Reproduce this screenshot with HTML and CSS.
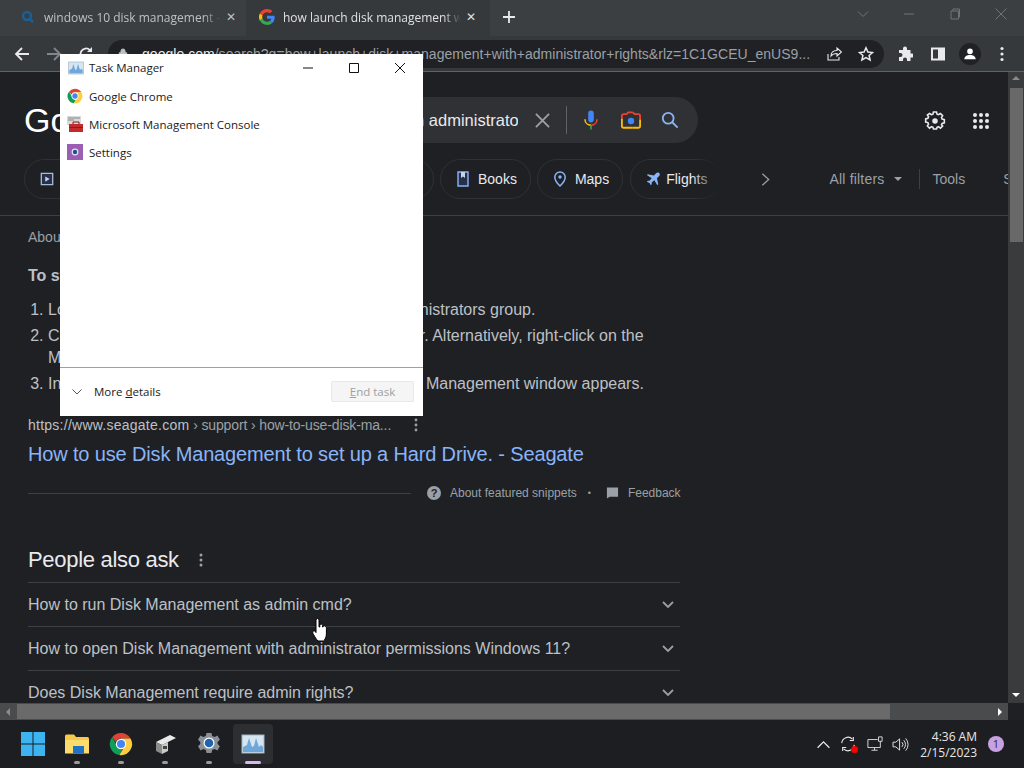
FILE: index.html
```html
<!DOCTYPE html>
<html lang="en">
<head>
  <meta charset="UTF-8" />
  <title>how launch disk management with administrator rights - Google Search</title>
  <link rel="stylesheet" href="styles.css">
</head>
<body>
  <svg class="defs" width="0" height="0">
    <symbol id="chrome" viewBox="0 0 24 24">
      <path fill="#db4437" d="M12 1a11 11 0 0 1 9.500 5.500H12a5.500 5.500 0 0 0-5.200 3.700L3.300 5.100A11 11 0 0 1 12 1z"/>
      <path fill="#0f9d58" d="M3.300 5.100l4.600 8.600a4.800 4.800 0 0 0 5.700 3.600L10.300 23A11 11 0 0 1 3.300 5.100z"/>
      <path fill="#ffcd40" d="M21.500 6.500A11 11 0 0 1 10.300 23l4.700-7.400a5 5 0 0 0 0-7.200l-3-1.900z"/>
      <circle cx="12" cy="12" r="5.200" fill="#fff"/>
      <circle cx="12" cy="12" r="4" fill="#4285f4"/>
    </symbol>
    <symbol id="taskmgr" viewBox="0 0 24 20">
      <rect x="1" y="1" width="22" height="18" fill="#d5e6f2" stroke="#9fb4c4"/>
      <path fill="#6fa8d8" d="M2 18V13l4-2 2-7 3 9 2-1 2-8 3 9 2-2 2 2v5z"/>
    </symbol>
  </svg>

  <div class="screen">
    <!-- Chrome tab strip -->
    <div class="tabstrip">
      <div class="tab">
        <svg class="tab-icon" viewBox="0 0 16 16"><circle cx="7" cy="7" r="4" fill="none" stroke="#1a5f96" stroke-width="2.500"/><path d="M10 10l3 3" stroke="#1a5f96" stroke-width="2.500"/></svg>
        <span class="tab-title">windows 10 disk management - Search</span>
        <span class="tab-close">✕</span>
      </div>
      <div class="tab tab-active">
        <svg class="tab-icon" viewBox="0 0 48 48">
          <path fill="#ea4335" d="M24 9.500c3.500 0 6.700 1.200 9.200 3.600l6.900-6.900C35.900 2.400 30.500 0 24 0 14.600 0 6.500 5.400 2.600 13.200l8 6.200C12.400 13.700 17.700 9.500 24 9.500z"/>
          <path fill="#4285f4" d="M47 24.500c0-1.600-.1-3.100-.4-4.500H24v9h12.900c-.6 3-2.200 5.500-4.700 7.200l7.700 6C44.400 37.600 47 31.600 47 24.500z"/>
          <path fill="#fbbc05" d="M10.500 28.600a14.500 14.500 0 0 1 0-9.200l-8-6.200a24 24 0 0 0 0 21.600z"/>
          <path fill="#34a853" d="M24 48c6.500 0 11.900-2.100 15.900-5.800l-7.700-6c-2.200 1.400-4.900 2.300-8.200 2.300-6.300 0-11.600-4.200-13.500-9.900l-8 6.200C6.500 42.600 14.600 48 24 48z"/>
        </svg>
        <span class="tab-title">how launch disk management with admin</span>
        <span class="tab-close">✕</span>
      </div>
      <svg class="new-tab" viewBox="0 0 12 12"><path d="M6 0v12M0 6h12" stroke="#e8eaed" stroke-width="1.800"/></svg>
      <div class="window-controls">
        <svg viewBox="0 0 14 14"><path d="M2 4.500l5 5 5-5"/></svg>
        <svg viewBox="0 0 14 14"><path d="M2 7h10"/></svg>
        <svg viewBox="0 0 14 14"><path d="M3 4h7.500v8H3zM5 4V2h6.500v8h-1"/></svg>
        <svg viewBox="0 0 14 14"><path d="M1.500 1.500l11 11M12.500 1.500l-11 11"/></svg>
      </div>
    </div>

    <!-- Chrome toolbar -->
    <div class="toolbar">
      <svg class="nav-icon" viewBox="0 0 16 16"><path d="M15 8H2M8 2L2 8l6 6" fill="none" stroke="#e8eaed" stroke-width="1.800"/></svg>
      <svg class="nav-icon" viewBox="0 0 16 16"><path d="M1 8h13M8 2l6 6-6 6" fill="none" stroke="#80868b" stroke-width="1.800"/></svg>
      <svg class="nav-icon" viewBox="0 0 16 16"><path d="M13.500 8a5.500 5.500 0 1 1-1.600-3.900" fill="none" stroke="#e8eaed" stroke-width="1.800"/><path d="M14 1v5H9z" fill="#e8eaed"/></svg>
      <div class="omnibox">
        <svg class="lock" viewBox="0 0 12 14"><path d="M1.500 6h9v7h-9zM3.500 6V4a2.500 2.500 0 0 1 5 0v2" fill="#bdc1c6" stroke="#bdc1c6"/></svg>
        <span class="url"><span class="url-host">google.com</span>/search?q=how+launch+disk+management+with+administrator+rights&amp;rlz=1C1GCEU_enUS9...</span>
        <svg class="omni-icon" viewBox="0 0 16 16"><path d="M2 8v6h11v-3M5 10c0-4 3-5.500 6-5.500V2l4.500 4L11 10V7.500C8.500 7.500 6.500 8 5 10z" fill="none" stroke="#e8eaed" stroke-width="1.100"/></svg>
        <svg class="omni-icon" viewBox="0 0 16 16"><path d="M8 1.800l1.900 4.200 4.600.5-3.400 3 1 4.500L8 11.700 3.900 14l1-4.500-3.400-3 4.600-.5z" fill="none" stroke="#e8eaed" stroke-width="1.500"/></svg>
      </div>
      <svg class="tool-icon tool-puzzle" viewBox="0 0 16 16"><path fill="#e8eaed" d="M6 2.500a2 2 0 0 1 4 0V4h3.500v3.500H15a2 2 0 0 1 0 4h-1.500V15H10v-1.500a2 2 0 0 0-4 0V15H2v-4h1.500a2 2 0 0 0 0-4H2V4h4z"/></svg>
      <svg class="tool-icon tool-panel" viewBox="0 0 16 16"><path fill-rule="evenodd" fill="#e8eaed" d="M1 1.500h14v13H1zM3 3.500v9h5v-9z"/></svg>
      <span class="avatar">
        <svg viewBox="0 0 16 16"><circle cx="8" cy="5" r="3.200" fill="#fff"/><path d="M1.500 14c0-3.500 3-5 6.500-5s6.500 1.500 6.500 5z" fill="#fff"/></svg>
      </span>
      <svg class="tool-icon" viewBox="0 0 16 16"><g fill="#e8eaed"><circle cx="8" cy="2.500" r="1.600"/><circle cx="8" cy="8" r="1.600"/><circle cx="8" cy="13.500" r="1.600"/></g></svg>
    </div>

    <div class="viewport">
      <main class="page">
        <header class="search-head">
          <div class="search-row">
            <span class="logo">Google</span>
            <div class="searchbox">
              <span class="query">how launch disk management with administrator rights</span>
              <svg class="clear-icon" viewBox="0 0 16 16"><path d="M1 1l14 14M15 1L1 15" stroke="#9aa0a6" stroke-width="2"/></svg>
              <span class="search-sep"></span>
              <svg class="mic-icon" viewBox="0 0 20 26">
                <rect x="6.500" y="1" width="7" height="15" rx="3.500" fill="#4285f4"/>
                <path d="M2.500 12c0 4.500 3.300 7.500 7.500 7.500" fill="none" stroke="#fbbc05" stroke-width="2"/>
                <path d="M10 19.500c4.200 0 7.500-3 7.500-7.500" fill="none" stroke="#ea4335" stroke-width="2"/>
                <path d="M10 19.500V25" stroke="#34a853" stroke-width="2"/>
              </svg>
              <svg class="lens-icon" viewBox="0 0 22 20" fill="none" stroke-width="2">
                <path d="M1 8V5a2 2 0 0 1 2-2h3l2-2h5" stroke="#ea4335"/>
                <path d="M13 1l2 2h4a2 2 0 0 1 2 2v4" stroke="#ea4335"/>
                <path d="M21 9v7a2 2 0 0 1-2 2h-6" stroke="#fbbc05"/>
                <path d="M1 8v8a2 2 0 0 0 2 2h10" stroke="#fbbc05"/>
                <circle cx="11" cy="10.500" r="3.500" fill="#4285f4" stroke="none"/>
              </svg>
              <svg class="search-icon" viewBox="0 0 20 20"><circle cx="8" cy="8" r="6" fill="none" stroke="#8ab4f8" stroke-width="2"/><path d="M12.500 12.500l6 6" stroke="#8ab4f8" stroke-width="2"/></svg>
            </div>
            <svg class="gear-icon" viewBox="0 0 24 24"><path fill="none" stroke="#e8eaed" stroke-width="2" d="M10 2h4l.6 2.800 1.900.8L19 4l2.800 2.800-1.500 2.500.8 1.900 2.900.8v4l-2.900.7-.8 1.900L21.800 20 19 22.800 16.500 21l-1.900.8L14 24h-4l-.6-2.200-1.900-.8L5 22.800 2.200 20l1.500-2.400-.8-1.900L0 15v-4l2.900-.8.8-1.900L2.200 6 5 4l2.500 1.600 1.900-.8z" transform="translate(1.800 .4) scale(.85)"/><circle cx="12" cy="12" r="3" fill="#e8eaed"/></svg>
            <svg class="apps-icon" viewBox="0 0 18 18"><g fill="#e8eaed"><circle cx="3" cy="3" r="2"/><circle cx="9" cy="3" r="2"/><circle cx="15" cy="3" r="2"/><circle cx="3" cy="9" r="2"/><circle cx="9" cy="9" r="2"/><circle cx="15" cy="9" r="2"/><circle cx="3" cy="15" r="2"/><circle cx="9" cy="15" r="2"/><circle cx="15" cy="15" r="2"/></g></svg>
          </div>
          <nav class="chips">
            <div class="chips-left">
              <span class="chip chip-wide">
                <svg class="chip-icon" viewBox="0 0 16 16"><path d="M1.500 1.500h13v13h-13z" fill="#26304a" stroke="#a9b9d6" stroke-width="1.500"/><path d="M6 5l5 3-5 3z" fill="#c5d3ea"/></svg>
                Videos
              </span>
              <span class="chip chip-wide">Images</span>
              <span class="chip chip-wide">News</span>
            </div>
            <span class="chip chip-books">
              <svg class="chip-icon" viewBox="0 0 12 16"><path d="M1 1h10v14H1z" fill="#26304a" stroke="#8ab4f8" stroke-width="1.400"/><path d="M4 1v6l2-1.500L8 7V1z" fill="#c5d3ea"/></svg>
              Books
            </span>
            <span class="chip chip-maps">
              <svg class="chip-icon" viewBox="0 0 14 16"><path d="M7 1a5.200 5.200 0 0 0-5.200 5.200C1.800 10 7 15 7 15s5.200-5 5.200-8.800A5.200 5.200 0 0 0 7 1z" fill="none" stroke="#8ab4f8" stroke-width="1.500"/><circle cx="7" cy="6" r="1.700" fill="#8ab4f8"/></svg>
              Maps
            </span>
            <span class="chip chip-faded">
              <svg class="chip-icon" viewBox="0 0 16 16"><path fill="#8ab4f8" d="M15 1c-1-1-2.500-.5-3.500.5L9 4 2 2.500 1 3.500 6.500 7 4 10H2l-1 1 3 1.500L5.500 15l1-1v-2l3-2.500 3.500 5.500 1-1-1.500-7 2.500-2.500c1-1 1.200-2.300 0-3.500z"/></svg>
              Flights
            </span>
            <svg class="chips-next" viewBox="0 0 10 16"><path d="M1.500 1.500L8.500 8l-7 6.500" fill="none" stroke="#9aa0a6" stroke-width="1.500"/></svg>
            <span class="filter-link">All filters</span>
            <span class="caret"></span>
            <span class="filter-sep"></span>
            <span class="tools-link">Tools</span>
            <span class="saved-link">SafeSearch</span>
          </nav>
        </header>

        <section class="results">
          <div class="about">About featured snippet</div>
          <div class="snippet-head">To start Disk Management with admin rights:</div>
          <ol class="steps">
            <li>Log on to the computer, using a member of the Administrators group.</li>
            <li>Click Start, type in disk management and press Enter. Alternatively, right-click on the Management Console icon.</li>
            <li>In the User Account Control box click Yes till the Disk Management window appears.</li>
          </ol>
          <div class="source">
            <span class="source-host">https://www.seagate.com</span><span class="source-path"> › support › how-to-use-disk-ma...</span>
            <svg class="dots" viewBox="0 0 4 14"><g fill="#9aa0a6"><circle cx="2" cy="2" r="1.400"/><circle cx="2" cy="7" r="1.400"/><circle cx="2" cy="12" r="1.400"/></g></svg>
          </div>
          <a class="result-title">How to use Disk Management to set up a Hard Drive. - Seagate</a>
          <div class="snippet-foot">
            <span class="foot-line"></span>
            <svg class="foot-icon" viewBox="0 0 14 14"><circle cx="7" cy="7" r="7" fill="#9aa0a6"/><text x="7" y="11" text-anchor="middle" class="foot-q">?</text></svg>
            <span>About featured snippets</span>
            <span class="foot-dot">•</span>
            <svg class="foot-icon foot-flag" viewBox="0 0 14 12"><path d="M1 0h12v10H4l-3 2z" fill="#9aa0a6"/></svg>
            <span>Feedback</span>
          </div>
          <h2 class="paa-head">People also ask
            <svg class="dots" viewBox="0 0 4 14"><g fill="#9aa0a6"><circle cx="2" cy="2" r="1.500"/><circle cx="2" cy="7" r="1.500"/><circle cx="2" cy="12" r="1.500"/></g></svg>
          </h2>
          <div class="paa-row">How to run Disk Management as admin cmd?<svg class="paa-chevron" viewBox="0 0 12 8"><path d="M1 1l5 5 5-5" fill="none" stroke="#9aa0a6" stroke-width="1.800"/></svg></div>
          <div class="paa-row">How to open Disk Management with administrator permissions Windows 11?<svg class="paa-chevron" viewBox="0 0 12 8"><path d="M1 1l5 5 5-5" fill="none" stroke="#9aa0a6" stroke-width="1.800"/></svg></div>
          <div class="paa-row">Does Disk Management require admin rights?<svg class="paa-chevron" viewBox="0 0 12 8"><path d="M1 1l5 5 5-5" fill="none" stroke="#9aa0a6" stroke-width="1.800"/></svg></div>
        </section>
      </main>
      <div class="vscroll">
        <span class="arrow-up"></span>
        <span class="vthumb"></span>
        <span class="arrow-down"></span>
      </div>
    </div>

    <div class="hscroll-row">
      <div class="hscroll">
        <span class="arrow-left"></span>
        <span class="hthumb"></span>
        <span class="arrow-right"></span>
      </div>
      <span class="scroll-corner"></span>
    </div>

    <!-- Windows taskbar -->
    <footer class="taskbar">
      <div class="task-item">
        <svg class="start-icon" viewBox="0 0 24 24"><g fill="#3cb4f2"><rect x="0" y="0" width="11.500" height="11.500"/><rect x="12.500" y="0" width="11.500" height="11.500"/><rect x="0" y="12.500" width="11.500" height="11.500"/><rect x="12.500" y="12.500" width="11.500" height="11.500"/></g></svg>
      </div>
      <div class="task-item task-open">
        <svg class="task-icon" viewBox="0 0 24 20"><path d="M0 2a1.500 1.500 0 0 1 1.500-1.500H9L11 3h11.500A1.500 1.500 0 0 1 24 4.500V19H0z" fill="#f7c948"/><path d="M0 6h24v13.500H0z" fill="#fbdc6c"/><rect x="8" y="12" width="11" height="7.500" fill="#1f72c4"/></svg>
      </div>
      <div class="task-item task-open"><svg class="task-icon task-chrome"><use href="#chrome"/></svg></div>
      <div class="task-item task-open">
        <svg class="task-icon" viewBox="0 0 24 22"><path d="M3 9l14-7 6 3-14 7z" fill="#e9e9e9"/><path d="M3 9l6 3v9l-6-3z" fill="#8c8c8c"/><path d="M9 12l6-3v9l-6 3z" fill="#c9c9c9"/><rect x="10" y="13" width="4" height="3" fill="#444"/></svg>
      </div>
      <div class="task-item task-open">
        <svg class="task-icon" viewBox="0 0 24 24"><path d="M9.500 1h5l.7 3 2.400 1 2.800-1.400 2.500 4.200-2.300 2.100v2.200l2.300 2.100-2.500 4.200-2.800-1.400-2.400 1-.7 3h-5l-.7-3-2.400-1-2.800 1.400L1 14.200l2.300-2.100v-2.200L1 7.800l2.500-4.200 2.800 1.400 2.400-1z" fill="#8a9096"/><circle cx="12" cy="11" r="5.500" fill="#fff"/><circle cx="12" cy="11" r="4.300" fill="#1f62b0"/></svg>
      </div>
      <div class="task-item task-active"><svg class="task-icon task-tm"><use href="#taskmgr"/></svg></div>

      <div class="tray">
        <svg class="tray-icon" viewBox="0 0 14 14"><path d="M1.500 10L7 4.500l5.500 5.500" fill="none" stroke="#e8e8e8" stroke-width="1.200"/></svg>
        <span class="sync">
          <svg class="tray-icon tray-sync" viewBox="0 0 18 18"><path d="M2 8a7 7 0 0 1 12-4.500M16 10a7 7 0 0 1-12 4.500" fill="none" stroke="#e8e8e8" stroke-width="1.200"/><path d="M15 1v4h-4M3 17v-4h4" fill="none" stroke="#e8e8e8" stroke-width="1.200"/></svg>
          <span class="sync-dot"></span>
        </span>
        <svg class="tray-icon tray-net" viewBox="0 0 18 18"><path d="M12 4H1v9h14V9M5 16h7M8.500 13v3" fill="none" stroke="#e8e8e8"/><path d="M13 1h4v5h-4zM15 6v3" fill="none" stroke="#e8e8e8"/></svg>
        <svg class="tray-icon tray-vol" viewBox="0 0 18 16"><path d="M1 5.500h3L8 2v12L4 10.500H1zM10.500 5.500a3.500 3.500 0 0 1 0 5M12.500 3.500a6.500 6.500 0 0 1 0 9M14.500 1.500a9.500 9.500 0 0 1 0 13" fill="none" stroke="#e8e8e8"/></svg>
        <div class="clock">
          <span>4:36 AM</span>
          <span>2/15/2023</span>
        </div>
        <span class="notify-badge">1</span>
      </div>
    </footer>

    <!-- Task Manager window floating over the browser -->
    <div class="tm-window">
      <div class="tm-title">
        <svg class="tm-app-icon"><use href="#taskmgr"/></svg>
        <span class="tm-title-text">Task Manager</span>
        <div class="tm-controls">
          <svg viewBox="0 0 12 12"><path d="M1 6h10"/></svg>
          <svg viewBox="0 0 12 12"><path d="M1.500 1.500h9v9h-9z"/></svg>
          <svg viewBox="0 0 12 12"><path d="M1 1l10 10M11 1L1 11"/></svg>
        </div>
      </div>
      <ul class="tm-list">
        <li><svg class="tm-app-icon"><use href="#chrome"/></svg>Google Chrome</li>
        <li>
          <svg class="tm-app-icon" viewBox="0 0 16 16"><path d="M0 0h14v9H0z" fill="#d9d9d9"/><path d="M1 2h12M1 4h6" stroke="#888"/><rect x="2" y="8" width="14" height="8" fill="#c22b2b"/><path d="M6 8V6h6v2" fill="none" stroke="#7a1a1a"/><path d="M2 11.500h14" stroke="#8f1a1a"/></svg>
          Microsoft Management Console
        </li>
        <li>
          <svg class="tm-app-icon" viewBox="0 0 16 16"><rect width="16" height="16" fill="#9a5fb4"/><circle cx="8" cy="8" r="3.400" fill="#e5e5f2"/><circle cx="8" cy="8" r="2.200" fill="#1f4f90"/></svg>
          Settings
        </li>
      </ul>
      <div class="tm-footer">
        <span class="more-details">
          <svg viewBox="0 0 10 6"><path d="M.5.500L5 5 9.500.500" fill="none" stroke="#555"/></svg>
          <span>More <u>d</u>etails</span>
        </span>
        <button class="end-task" type="button" disabled><u>E</u>nd task</button>
      </div>
    </div>

    <svg class="hand-cursor" viewBox="0 0 16 24"><path d="M4 2a1.500 1.500 0 0 1 3 0v7h.8V7.500a1.400 1.400 0 0 1 2.800 0V9h.6V8.500a1.400 1.400 0 0 1 2.400 0c.600.500.800 1 .8 2v5.500c0 3-1.500 6-3 7H6c-2-2-3-4-4.500-6.500C.5 15 .5 13.500 1.500 13c1-.4 1.800.2 2.500 1.500z" fill="#fff" stroke="#000" stroke-width="1"/></svg>
  </div>
</body>
</html>
```

FILE: styles.css
```css
* {
  box-sizing: border-box;
}

body {
  margin: 0;
  font-family: "Liberation Sans", Arial, sans-serif;
  background-color: #1f2024;
}

.defs {
  position: absolute;
}

.screen {
  position: relative;
  width: 1024px;
  height: 768px;
  overflow: hidden;
  display: flex;
  flex-direction: column;
}

/* browser chrome */
.tabstrip {
  height: 36px;
  display: flex;
  align-items: center;
  padding-left: 8px;
  background-color: #3b3f42;
  flex-shrink: 0;
}

.tab {
  width: 238px;
  height: 36px;
  padding: 0 5px 2px 12px;
  display: flex;
  align-items: center;
  color: #bdc1c6;
}

.tab-active {
  width: 244px;
  padding: 0 9px 2px 13px;
  background-color: #36393c;
  color: #dfe1e5;
}

.tab-icon {
  width: 16px;
  height: 16px;
  flex-shrink: 0;
}

.tab-title {
  flex: 1;
  margin-left: 8px;
  font-family: "Open Sans", sans-serif;
  font-size: 12px;
  white-space: nowrap;
  overflow: hidden;
  -webkit-mask-image: linear-gradient(to right, #000 90%, transparent);
  mask-image: linear-gradient(to right, #000 90%, transparent);
}

.tab-close {
  width: 20px;
  text-align: center;
  font-size: 12px;
}

.new-tab {
  width: 12px;
  height: 12px;
  margin: -2px 0 0 13px;
}

.window-controls {
  margin-left: auto;
  display: flex;
  gap: 32px;
  padding-right: 16px;
  margin-top: -8px;
}

.window-controls svg {
  width: 14px;
  height: 14px;
  fill: none;
  stroke: #6f7477;
}

.toolbar {
  height: 36px;
  display: flex;
  align-items: center;
  padding-left: 14px;
  background-color: #36393c;
  border-bottom: 1px solid #5f6368;
  flex-shrink: 0;
}

.nav-icon {
  width: 16px;
  height: 16px;
  margin-right: 16px;
}

.omnibox {
  width: 776px;
  height: 28px;
  margin-left: -2px;
  padding: 0 10px;
  display: flex;
  align-items: center;
  border-radius: 14px;
  background-color: #202124;
}

.lock {
  width: 10px;
  height: 13px;
  margin-right: 14px;
}

.url {
  flex: 1;
  font-size: 14px;
  letter-spacing: 0.03px;
  color: #9aa0a6;
  white-space: nowrap;
  overflow: hidden;
}

.url-host {
  color: #e8eaed;
}

.omni-icon {
  width: 16px;
  height: 16px;
  margin-left: 16px;
}

.tool-icon {
  width: 16px;
  height: 16px;
  margin-left: 16px;
}

.tool-puzzle {
  margin-left: 13px;
}

.tool-panel {
  margin-left: 17px;
}

.avatar {
  width: 22px;
  height: 22px;
  margin-left: 13px;
  margin-right: -3px;
  padding: 4px;
  border-radius: 50%;
  background-color: #202124;
  display: flex;
}

.avatar svg {
  width: 14px;
  height: 14px;
}

/* page */
.viewport {
  flex: 1;
  min-height: 0;
  display: flex;
}

.page {
  flex: 1;
  min-width: 0;
  overflow: hidden;
  background-color: #1f2024;
}

.search-head {
  height: 144px;
  border-bottom: 1px solid #3c4043;
}

.search-row {
  height: 87px;
  padding: 25px 0 0 24px;
  display: flex;
  align-items: flex-start;
}

.logo {
  width: 120px;
  line-height: 46px;
  font-size: 34px;
  color: #fff;
}

.searchbox {
  width: 554px;
  height: 46px;
  padding-left: 28px;
  display: flex;
  align-items: center;
  border-radius: 23px;
  background-color: #303134;
}

.query {
  width: 346px;
  font-size: 16.5px;
  color: #e8eaed;
  white-space: nowrap;
  overflow: hidden;
}

.clear-icon {
  width: 15px;
  height: 15px;
  margin-left: 17px;
}

.search-sep {
  width: 1px;
  height: 28px;
  margin-left: 16px;
  background-color: #5f6368;
}

.mic-icon {
  width: 16px;
  height: 22px;
  margin-left: 16px;
}

.lens-icon {
  width: 20px;
  height: 19px;
  margin-left: 22px;
}

.search-icon {
  width: 18px;
  height: 18px;
  margin-left: 20px;
}

.gear-icon {
  width: 22px;
  height: 22px;
  margin: 13px 0 0 226px;
}

.apps-icon {
  width: 18px;
  height: 18px;
  margin: 15px 0 0 26px;
}

.chips {
  height: 40px;
  padding-left: 24px;
  display: flex;
  align-items: center;
  white-space: nowrap;
  overflow: hidden;
}

.chips > * {
  flex: none;
}

.chips-left {
  width: 410px;
  display: flex;
  gap: 6px;
}

.chip {
  height: 40px;
  margin-left: 6px;
  padding: 0 15px;
  display: flex;
  align-items: center;
  gap: 8px;
  border: 1px solid #303134;
  border-radius: 20px;
  font-size: 14px;
  color: #e8eaed;
}

.chips-left .chip {
  margin-left: 0;
}

.chip-wide {
  flex: 1;
}

.chip-books,
.chip-maps {
  padding-right: 13px;
}

.chip-faded {
  position: relative;
  margin-left: 7px;
  padding-right: 13px;
  gap: 6px;
}

.chip-faded::after {
  content: "";
  position: absolute;
  top: -1px;
  right: -1px;
  bottom: -1px;
  width: 30px;
  background: linear-gradient(to right, rgba(31, 32, 36, 0), #1f2024);
}

.chip-icon {
  width: 14px;
  height: 16px;
  flex-shrink: 0;
}

.chips-next {
  width: 9px;
  height: 15px;
  margin-left: 40px;
}

.filter-link {
  margin-left: 59px;
  font-size: 14px;
  letter-spacing: 0.2px;
  color: #9aa0a6;
}

.caret {
  width: 0;
  height: 0;
  margin-left: 9px;
  border-style: solid;
  border-width: 4px 4px 0;
  border-color: #9aa0a6 transparent transparent;
}

.filter-sep {
  width: 1px;
  height: 20px;
  margin-left: 17px;
  background-color: #3c4043;
}

.tools-link {
  margin-left: 13px;
  font-size: 14px;
  color: #9aa0a6;
}

.saved-link {
  margin-left: 38px;
  font-size: 14px;
  color: #9aa0a6;
}

.results {
  width: 680px;
  padding: 12px 0 0 28px;
  color: #bdc1c6;
}

.about {
  height: 18px;
  font-size: 14px;
  line-height: 18px;
  color: #9aa0a6;
}

.snippet-head {
  margin-top: 19px;
  font-size: 16px;
  line-height: 22px;
  font-weight: bold;
}

.steps {
  margin: 12px 0 0;
  padding-left: 20px;
  font-size: 16px;
  line-height: 22px;
}

.steps li {
  margin-bottom: 4px;
}

.source {
  margin-top: 21px;
  display: flex;
  align-items: center;
  height: 18px;
  font-size: 14px;
  white-space: pre;
}

.source-host {
  color: #bdc1c6;
  letter-spacing: 0.25px;
}

.source-path {
  color: #9aa0a6;
  letter-spacing: -0.13px;
}

.source .dots {
  margin-left: 23px;
}

.dots {
  width: 4px;
  height: 14px;
}

.result-title {
  display: block;
  margin-top: 7px;
  font-size: 20px;
  line-height: 26px;
  letter-spacing: -0.15px;
  color: #8ab4f8;
}

.snippet-foot {
  margin-top: 17px;
  height: 18px;
  display: flex;
  align-items: center;
  font-size: 12px;
  white-space: nowrap;
  color: #9aa0a6;
}

.foot-line {
  width: 383px;
  height: 1px;
  margin-right: 16px;
  flex: none;
  background-color: #3c4043;
}

.foot-icon {
  width: 14px;
  height: 14px;
  margin-right: 9px;
  flex-shrink: 0;
}

.foot-flag {
  width: 13px;
  height: 12px;
}

.foot-q {
  font-size: 11px;
  font-weight: bold;
  fill: #1f2024;
}

.foot-dot {
  margin: 0 15px 0 11px;
  font-size: 9px;
}

.paa-head {
  margin: 44px 0 0;
  height: 28px;
  display: flex;
  align-items: center;
  gap: 20px;
  font-size: 22px;
  font-weight: normal;
  letter-spacing: -0.3px;
  color: #e8eaed;
}

.paa-row {
  height: 44px;
  display: flex;
  align-items: center;
  justify-content: space-between;
  padding-right: 6px;
  border-top: 1px solid #3c4043;
  font-size: 16px;
}

.paa-head + .paa-row {
  margin-top: 8px;
}

.paa-chevron {
  width: 12px;
  height: 8px;
}

/* scrollbars */
.vscroll {
  width: 16px;
  display: flex;
  flex-direction: column;
  align-items: center;
  background-color: #3a3b3d;
}

.vthumb {
  width: 13px;
  height: 154px;
  margin-top: 8px;
  background-color: #686868;
}

.arrow-up,
.arrow-down {
  width: 0;
  height: 0;
  border-style: solid;
  border-color: transparent;
}

.arrow-up {
  margin-top: 4px;
  border-width: 0 4px 4px;
  border-bottom-color: #8a8a8a;
}

.arrow-down {
  margin-top: auto;
  margin-bottom: 6px;
  border-width: 4px 4px 0;
  border-top-color: #fff;
}

.hscroll-row {
  height: 17px;
  display: flex;
  flex-shrink: 0;
}

.hscroll {
  flex: 1;
  display: flex;
  align-items: center;
  padding: 0 6px;
  background-color: #4a4b4c;
}

.hthumb {
  width: 873px;
  height: 15px;
  margin-left: 7px;
  background-color: #6a6a6a;
}

.arrow-left,
.arrow-right {
  width: 0;
  height: 0;
  border-style: solid;
  border-color: transparent;
  border-width: 4px;
}

.arrow-left {
  border-left-width: 0;
  border-right-color: #8a8a8a;
}

.arrow-right {
  margin-left: auto;
  border-right-width: 0;
  border-left-color: #fff;
}

.scroll-corner {
  width: 16px;
  background-color: #1f2024;
}

/* taskbar */
.taskbar {
  height: 48px;
  flex-shrink: 0;
  padding-left: 13px;
  display: flex;
  align-items: center;
  gap: 4px;
  background-color: #1c1e21;
}

.task-item {
  position: relative;
  width: 40px;
  height: 40px;
  display: flex;
  align-items: center;
  justify-content: center;
  border-radius: 4px;
}

.task-open::after,
.task-active::after {
  content: "";
  position: absolute;
  bottom: 0;
  left: 17px;
  width: 6px;
  height: 3px;
  border-radius: 2px;
  background-color: #9a9a9a;
}

.task-active {
  background-color: #2d2e32;
}

.task-active::after {
  left: 12px;
  width: 16px;
  background-color: #d8b8e8;
}

.start-icon {
  width: 24px;
  height: 24px;
}

.task-icon {
  width: 24px;
  height: 24px;
}

.tray {
  margin-left: auto;
  display: flex;
  align-items: center;
  padding-right: 20px;
}

.tray-icon {
  width: 15px;
  height: 15px;
}

.sync {
  position: relative;
  margin-left: 9px;
  display: flex;
}

.tray-sync {
  width: 16px;
  height: 16px;
}

.sync-dot {
  position: absolute;
  right: -2px;
  bottom: -1px;
  width: 7px;
  height: 7px;
  border-radius: 50%;
  background-color: #ff0000;
}

.tray-net {
  width: 16px;
  height: 16px;
  margin-left: 11px;
}

.tray-vol {
  width: 17px;
  height: 15px;
  margin-left: 9px;
}

.clock {
  width: 68px;
  display: flex;
  flex-direction: column;
  align-items: flex-end;
  gap: 1px;
  font-family: "Open Sans", sans-serif;
  font-size: 12px;
  line-height: 15px;
  color: #e8e8e8;
}

.notify-badge {
  width: 16px;
  height: 16px;
  margin-left: 11px;
  border-radius: 50%;
  background-color: #c8a2e0;
  color: #2a2a2a;
  font-family: "Open Sans", sans-serif;
  font-size: 11px;
  line-height: 16px;
  text-align: center;
}

/* task manager window */
.tm-window {
  position: absolute;
  left: 60px;
  top: 54px;
  width: 363px;
  height: 362px;
  display: flex;
  flex-direction: column;
  background-color: #fff;
  color: #1a1a1a;
  font-family: "Open Sans", sans-serif;
  font-size: 11.5px;
}

.tm-title {
  height: 27px;
  padding-left: 8px;
  display: flex;
  align-items: center;
}

.tm-app-icon {
  width: 16px;
  height: 16px;
  margin-right: 5px;
  flex-shrink: 0;
}

.tm-controls {
  margin-left: auto;
  display: flex;
  gap: 34px;
  padding-right: 17px;
}

.tm-controls svg {
  width: 12px;
  height: 12px;
  fill: none;
  stroke: #111;
}

.tm-list {
  list-style: none;
  margin: 1px 0 0;
  padding: 0 0 0 7px;
  flex: 1;
}

.tm-list li {
  height: 28px;
  display: flex;
  align-items: center;
}

.tm-list .tm-app-icon {
  margin-right: 6px;
}

.tm-footer {
  height: 49px;
  padding: 0 9px 1px 12px;
  display: flex;
  align-items: center;
  justify-content: space-between;
  border-top: 1px solid #a0a0a0;
}

.more-details {
  display: flex;
  align-items: center;
  gap: 12px;
}

.more-details svg {
  width: 10px;
  height: 6px;
}

.end-task {
  width: 83px;
  height: 21px;
  padding: 0;
  border: 1px solid #e8e8e8;
  border-radius: 2px;
  background-color: #f5f5f5;
  color: #a0a0a0;
  font-family: "Open Sans", sans-serif;
  font-size: 11.5px;
}

.hand-cursor {
  position: absolute;
  left: 312px;
  top: 618px;
  width: 16px;
  height: 24px;
}
```
